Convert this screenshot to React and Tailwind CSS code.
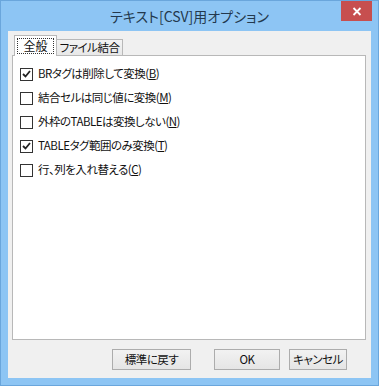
import React from "react";

const font = {
  fontFamily: '"Noto Sans CJK JP", "Noto Sans", sans-serif',
  fontFeatureSettings: '"palt"',
};

function Check({ checked }) {
  return (
    <div className="w-[13px] h-[13px] border border-[#333333] bg-white flex items-center justify-center shrink-0">
      {checked && (
        <svg width="9" height="8" viewBox="0 0 9 8">
          <path d="M1 4 L3.5 6.5 L8 1" fill="none" stroke="#222" strokeWidth="1.8" />
        </svg>
      )}
    </div>
  );
}

function Row({ checked, text, u }) {
  return (
    <div className="h-[24px] flex items-center gap-[5px] text-[11.5px] tracking-[-0.5px] text-[#111] whitespace-nowrap">
      <Check checked={checked} />
      <span className="leading-none">
        {text}(<span className="underline">{u}</span>)
      </span>
    </div>
  );
}

const btn =
  "h-[21px] border border-[#acacac] bg-gradient-to-b from-[#f2f2f2] to-[#e5e5e5] flex items-center justify-center text-[11.5px] tracking-[-0.5px] text-[#111] whitespace-nowrap";

export default function App() {
  return (
    <div style={font} className="w-[379px] h-[386px] bg-[#8dc5f4] border border-[#6aa6dc] flex flex-col px-[7px] pb-[7px] relative">
      <div className="h-[30px] flex items-center justify-center text-[14px] text-[#23384d] whitespace-nowrap">
        テキスト[CSV]用オプション
      </div>
      <div className="absolute top-0 right-[6px] w-[31px] h-[20px] bg-[#c74f4f] flex items-center justify-center">
        <svg width="10" height="9" viewBox="0 0 10 9">
          <path d="M1.5 1 L8.5 8 M8.5 1 L1.5 8" stroke="#fff" strokeWidth="1.8" />
        </svg>
      </div>
      <div className="flex-1 bg-[#f0f0f0] flex flex-col pt-[4px] pl-[4px] pr-[5px] pb-[8px]">
        <div className="flex items-end h-[20px] pl-[2px] relative z-10">
          <div className="w-[43px] h-[21px] bg-white border-l border-t border-r border-[#b8b8b8] flex items-center justify-center -mb-px">
            <div className="border border-dotted border-[#333] px-[5px] h-[16px] flex items-center text-[12px] text-[#111] whitespace-nowrap">
              全般
            </div>
          </div>
          <div className="w-[66px] h-[16px] bg-gradient-to-b from-[#f3f3f3] to-[#e8e8e8] border-t border-r border-[#b8b8b8] flex items-center justify-center text-[11.5px] tracking-[-0.5px] text-[#111] whitespace-nowrap">
            ファイル結合
          </div>
        </div>
        <div className="h-[285px] bg-white border border-[#b8b8b8] pt-[6px] pl-[7px] flex flex-col">
          <Row checked text="BRタグは削除して変換" u="B" />
          <Row text="結合セルは同じ値に変換" u="M" />
          <Row text="外枠のTABLEは変換しない" u="N" />
          <Row checked text="TABLEタグ範囲のみ変換" u="T" />
          <Row text="行、列を入れ替える" u="C" />
        </div>
        <div className="flex-1 flex items-end justify-end pr-[19px]">
          <div className={`${btn} w-[79px] mr-[23px]`}>標準に戻す</div>
          <div className={`${btn} w-[66px] mr-[9px]`}>OK</div>
          <div className={`${btn} w-[58px]`}>キャンセル</div>
        </div>
      </div>
    </div>
  );
}
